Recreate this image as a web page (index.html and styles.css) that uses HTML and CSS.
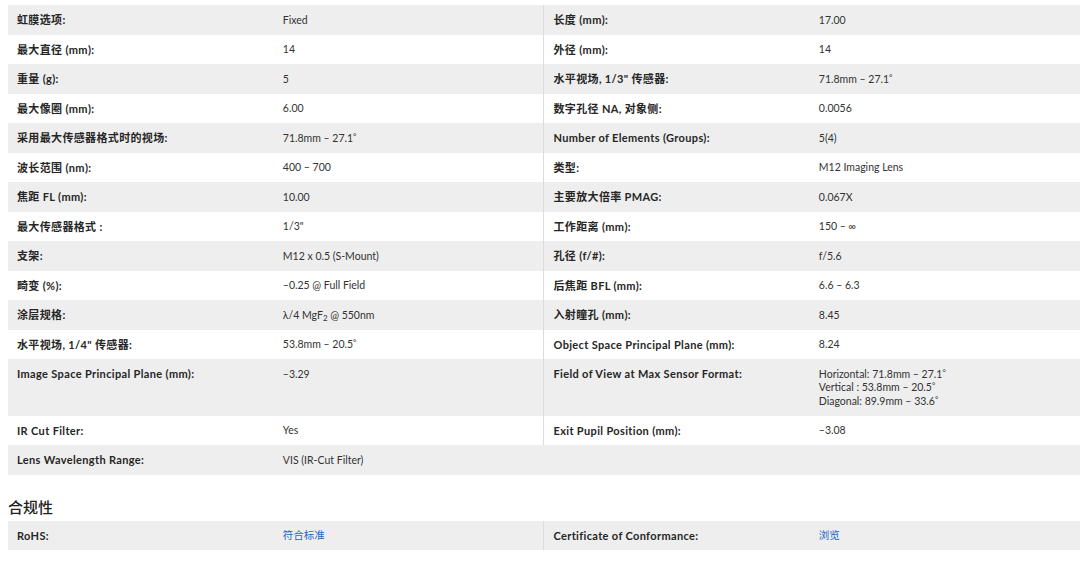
FILE: index.html
```html
<!DOCTYPE html>
<html lang="zh">
<head>
<meta charset="utf-8">
<title>Specs</title>
<link rel="stylesheet" href="styles.css">
</head>
<body>
<table class="specs">
  <colgroup><col class="lab"><col class="val"><col class="lab"><col class="val"></colgroup>
  <tbody>
    <tr><th>虹膜选项:</th><td>Fixed</td><th class="split">长度 (mm):</th><td>17.00</td></tr>
    <tr><th>最大直径 (mm):</th><td>14</td><th class="split">外径 (mm):</th><td>14</td></tr>
    <tr><th>重量 (g):</th><td>5</td><th class="split">水平视场, 1/3" 传感器:</th><td>71.8mm – 27.1<span class="deg">°</span></td></tr>
    <tr><th>最大像圈 (mm):</th><td>6.00</td><th class="split">数字孔径 NA, 对象侧:</th><td>0.0056</td></tr>
    <tr><th>采用最大传感器格式时的视场:</th><td>71.8mm – 27.1<span class="deg">°</span></td><th class="split">Number of Elements (Groups):</th><td>5(4)</td></tr>
    <tr><th>波长范围 (nm):</th><td>400 – 700</td><th class="split">类型:</th><td>M12 Imaging Lens</td></tr>
    <tr><th>焦距 FL (mm):</th><td>10.00</td><th class="split">主要放大倍率 PMAG:</th><td>0.067X</td></tr>
    <tr><th>最大传感器格式 :</th><td>1/3"</td><th class="split">工作距离 (mm):</th><td>150 – ∞</td></tr>
    <tr><th>支架:</th><td>M12 x 0.5 (S-Mount)</td><th class="split">孔径 (f/#):</th><td>f/5.6</td></tr>
    <tr><th>畸变 (%):</th><td>–0.25 @ Full Field</td><th class="split">后焦距 BFL (mm):</th><td>6.6 – 6.3</td></tr>
    <tr><th>涂层规格:</th><td>λ/4 MgF<sub>2</sub> @ 550nm</td><th class="split">入射瞳孔 (mm):</th><td>8.45</td></tr>
    <tr><th>水平视场, 1/4" 传感器:</th><td>53.8mm – 20.5<span class="deg">°</span></td><th class="split">Object Space Principal Plane (mm):</th><td>8.24</td></tr>
    <tr><th>Image Space Principal Plane (mm):</th><td>–3.29</td><th class="split">Field of View at Max Sensor Format:</th><td>Horizontal: 71.8mm – 27.1<span class="deg">°</span><br>Vertical : 53.8mm – 20.5<span class="deg">°</span><br>Diagonal: 89.9mm – 33.6<span class="deg">°</span></td></tr>
    <tr><th>IR Cut Filter:</th><td>Yes</td><th class="split">Exit Pupil Position (mm):</th><td>–3.08</td></tr>
    <tr><th>Lens Wavelength Range:</th><td>VIS (IR-Cut Filter)</td><td></td><td></td></tr>
  </tbody>
</table>

<h2 class="section-title">合规性</h2>
<table class="specs">
  <colgroup><col class="lab"><col class="val"><col class="lab"><col class="val"></colgroup>
  <tbody>
    <tr><th>RoHS:</th><td><a class="link" href="#">符合标准</a></td><th class="split">Certificate of Conformance:</th><td><a class="link" href="#">浏览</a></td></tr>
  </tbody>
</table>
</body>
</html>
```
FILE: styles.css
```css
html, body {
  margin: 0;
  padding: 0;
  background: #ffffff;
}
body {
  padding: 5px 7px 0 8px;
  font-family: "Lato", "Noto Sans CJK SC", sans-serif;
  color: #333333;
  font-size: 11px;
}
.specs {
  width: 100%;
  border-collapse: collapse;
  table-layout: fixed;
}
.specs .lab {
  width: 24.8%;
}
.specs .val {
  width: 25.2%;
}
.specs tr:nth-child(odd) {
  background: #eeeeee;
}
.specs th,
.specs td {
  text-align: left;
  vertical-align: top;
  padding: 8px 9px 8px 9px;
  line-height: 13.5px;
}
.specs th {
  font-size: 11px;
  font-weight: 700;
  letter-spacing: 0.35px;
  color: #262626;
}
.specs td {
  font-size: 10.5px;
  font-weight: 400;
  color: #333333;
  padding-top: 8.5px;
  padding-bottom: 7.5px;
}
.specs .split {
  border-left: 1px solid #dcdcdc;
}
.specs sub {
  font-size: 8px;
  line-height: 0;
  vertical-align: -2px;
}
.deg {
  font-size: 8px;
  vertical-align: 3px;
  line-height: 0;
}
.section-title {
  margin: 0;
  padding: 24px 0 6px 0;
  font-size: 15px;
  font-weight: 500;
  line-height: 16px;
  color: #222222;
  font-family: "Noto Sans CJK SC", sans-serif;
}
.link {
  color: #1a66c4;
  text-decoration: none;
}
```
